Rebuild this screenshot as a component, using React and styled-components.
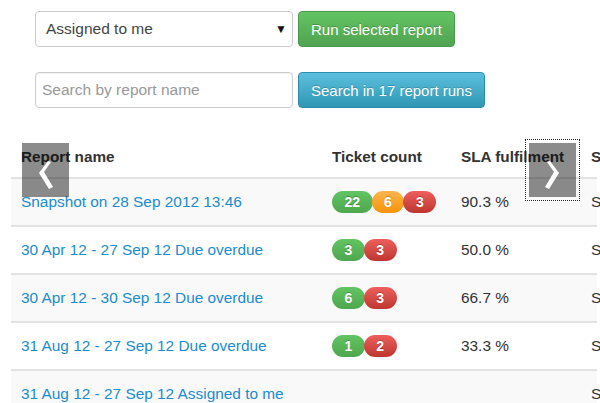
import React from "react";
import styled, { createGlobalStyle } from "styled-components";

const Global = createGlobalStyle`
  html, body { margin: 0; padding: 0; background: #fff; }
  body {
    font-family: "Liberation Sans", Arial, sans-serif;
    font-size: 15px;
    color: #333;
    overflow: hidden;
  }
`;

const Page = styled.div`
  width: 600px;
  height: 403px;
  overflow: hidden;
`;

const Form = styled.div`
  display: flex;
  flex-direction: column;
  gap: 25px;
  padding: 11px 0 0 35px;
`;

const FieldRow = styled.div`
  display: flex;
  gap: 5px;
  align-items: center;
`;

const SelectBox = styled.div`
  box-sizing: border-box;
  width: 258px;
  height: 36px;
  border: 1px solid #ccc;
  border-radius: 4px;
  background: #fff;
  display: flex;
  align-items: center;
  justify-content: space-between;
  padding: 0 5px 0 10px;
  font-size: 15.5px;
  color: #444;
`;

const Caret = styled.span`
  font-size: 12px;
  color: #111;
`;

const SearchInput = styled.input`
  box-sizing: border-box;
  width: 258px;
  height: 36px;
  border: 1px solid #ccc;
  border-radius: 4px;
  padding: 0 6px;
  font-family: inherit;
  font-size: 15.5px;
  color: #444;
  box-shadow: inset 0 1px 1px rgba(0, 0, 0, 0.06);
  &::placeholder { color: #999; }
`;

const palettes = {
  success: ["#62c462", "#51a351", "#4b9a4b"],
  info: ["#5bc0de", "#2f96b4", "#2d8db0"],
};

const Button = styled.button`
  box-sizing: border-box;
  height: 36px;
  padding: 0 12px;
  border-radius: 4px;
  border: 1px solid ${(p) => palettes[p.$tone][2]};
  background: linear-gradient(${(p) => palettes[p.$tone][0]}, ${(p) => palettes[p.$tone][1]});
  color: #fff;
  font-family: inherit;
  font-size: 15px;
  text-shadow: 0 -1px 0 rgba(0, 0, 0, 0.2);
  cursor: pointer;
`;

const TableWrap = styled.div`
  position: relative;
  margin: 22px 0 0 11px;
  width: 586px;
`;

const Table = styled.table`
  width: 586px;
  border-collapse: collapse;
  table-layout: fixed;
  white-space: nowrap;
`;

const HeadCell = styled.th`
  text-align: left;
  font-weight: bold;
  font-size: 15.3px;
  color: #333;
  height: 41px;
  padding: 6px 0 0 10px;
  border-bottom: 2px solid #e3e3e3;
  overflow: visible;
`;

const Row = styled.tr`
  background: ${(p) => (p.$striped ? "#f9f9f9" : "#fff")};
`;

const Cell = styled.td`
  height: 46px;
  padding: 0 0 0 10px;
  border-bottom: 2px solid #e3e3e3;
  font-size: 15.4px;
  color: #333;
  overflow: visible;
`;

const ReportLink = styled.a`
  color: #1a8cd0;
  text-decoration: none;
`;

const Pills = styled.div`
  display: flex;
  align-items: center;
`;

const badgeTones = {
  green: ["#62c462", "#4ea74e"],
  orange: ["#fbb450", "#f89406"],
  red: ["#ee5f5b", "#bd362f"],
};

const Pill = styled.span`
  box-sizing: border-box;
  height: 22px;
  padding: 0 12.5px;
  border-radius: 11px;
  display: inline-flex;
  align-items: center;
  justify-content: center;
  font-size: 14px;
  font-weight: bold;
  color: #fff;
  text-shadow: 0 -1px 0 rgba(0, 0, 0, 0.25);
  background: linear-gradient(${(p) => badgeTones[p.$tone][0]}, ${(p) => badgeTones[p.$tone][1]});
  & + & { margin-left: -1px; }
`;

const SlideControl = styled.div`
  position: absolute;
  top: 13px;
  left: ${(p) => p.$left}px;
  width: 47px;
  height: 54px;
  background: rgba(0, 0, 0, 0.45);
  display: flex;
  align-items: center;
  justify-content: center;
  outline: ${(p) => (p.$focused ? "1px dotted #222" : "none")};
  outline-offset: 3px;
`;

const Chevron = ({ dir }) => (
  <svg width="47" height="54" viewBox="0 0 47 54">
    <polygon
      fill="#fff"
      points="26,18 29,19 22,29 31,44 27,46 17,30"
      transform={dir === "right" ? "translate(47,0) scale(-1,1)" : undefined}
    />
  </svg>
);

const rows = [
  { name: "Snapshot on 28 Sep 2012 13:46", pills: [["green", 22], ["orange", 6], ["red", 3]], sla: "90.3 %" },
  { name: "30 Apr 12 - 27 Sep 12 Due overdue", pills: [["green", 3], ["red", 3]], sla: "50.0 %" },
  { name: "30 Apr 12 - 30 Sep 12 Due overdue", pills: [["green", 6], ["red", 3]], sla: "66.7 %" },
  { name: "31 Aug 12 - 27 Sep 12 Due overdue", pills: [["green", 1], ["red", 2]], sla: "33.3 %" },
  { name: "31 Aug 12 - 27 Sep 12 Assigned to me", pills: [], sla: "" },
];

export default function App() {
  return (
    <Page>
      <Global />
      <Form>
        <FieldRow>
          <SelectBox>
            <span>Assigned to me</span>
            <Caret>▼</Caret>
          </SelectBox>
          <Button $tone="success">Run selected report</Button>
        </FieldRow>
        <FieldRow>
          <SearchInput placeholder="Search by report name" />
          <Button $tone="info">Search in 17 report runs</Button>
        </FieldRow>
      </Form>
      <TableWrap>
        <Table>
          <colgroup>
            <col style={{ width: 311 }} />
            <col style={{ width: 129 }} />
            <col style={{ width: 130 }} />
            <col style={{ width: 16 }} />
          </colgroup>
          <thead>
            <tr>
              <HeadCell>Report name</HeadCell>
              <HeadCell>Ticket count</HeadCell>
              <HeadCell>SLA fulfilment</HeadCell>
              <HeadCell>Status</HeadCell>
            </tr>
          </thead>
          <tbody>
            {rows.map((r, i) => (
              <Row key={r.name} $striped={i % 2 === 0}>
                <Cell>
                  <ReportLink href="#">{r.name}</ReportLink>
                </Cell>
                <Cell>
                  <Pills>
                    {r.pills.map(([tone, n], j) => (
                      <Pill key={j} $tone={tone}>{n}</Pill>
                    ))}
                  </Pills>
                </Cell>
                <Cell>{r.sla}</Cell>
                <Cell>Saved</Cell>
              </Row>
            ))}
          </tbody>
        </Table>
        <SlideControl $left={11}>
          <Chevron dir="left" />
        </SlideControl>
        <SlideControl $left={518} $focused>
          <Chevron dir="right" />
        </SlideControl>
      </TableWrap>
    </Page>
  );
}
